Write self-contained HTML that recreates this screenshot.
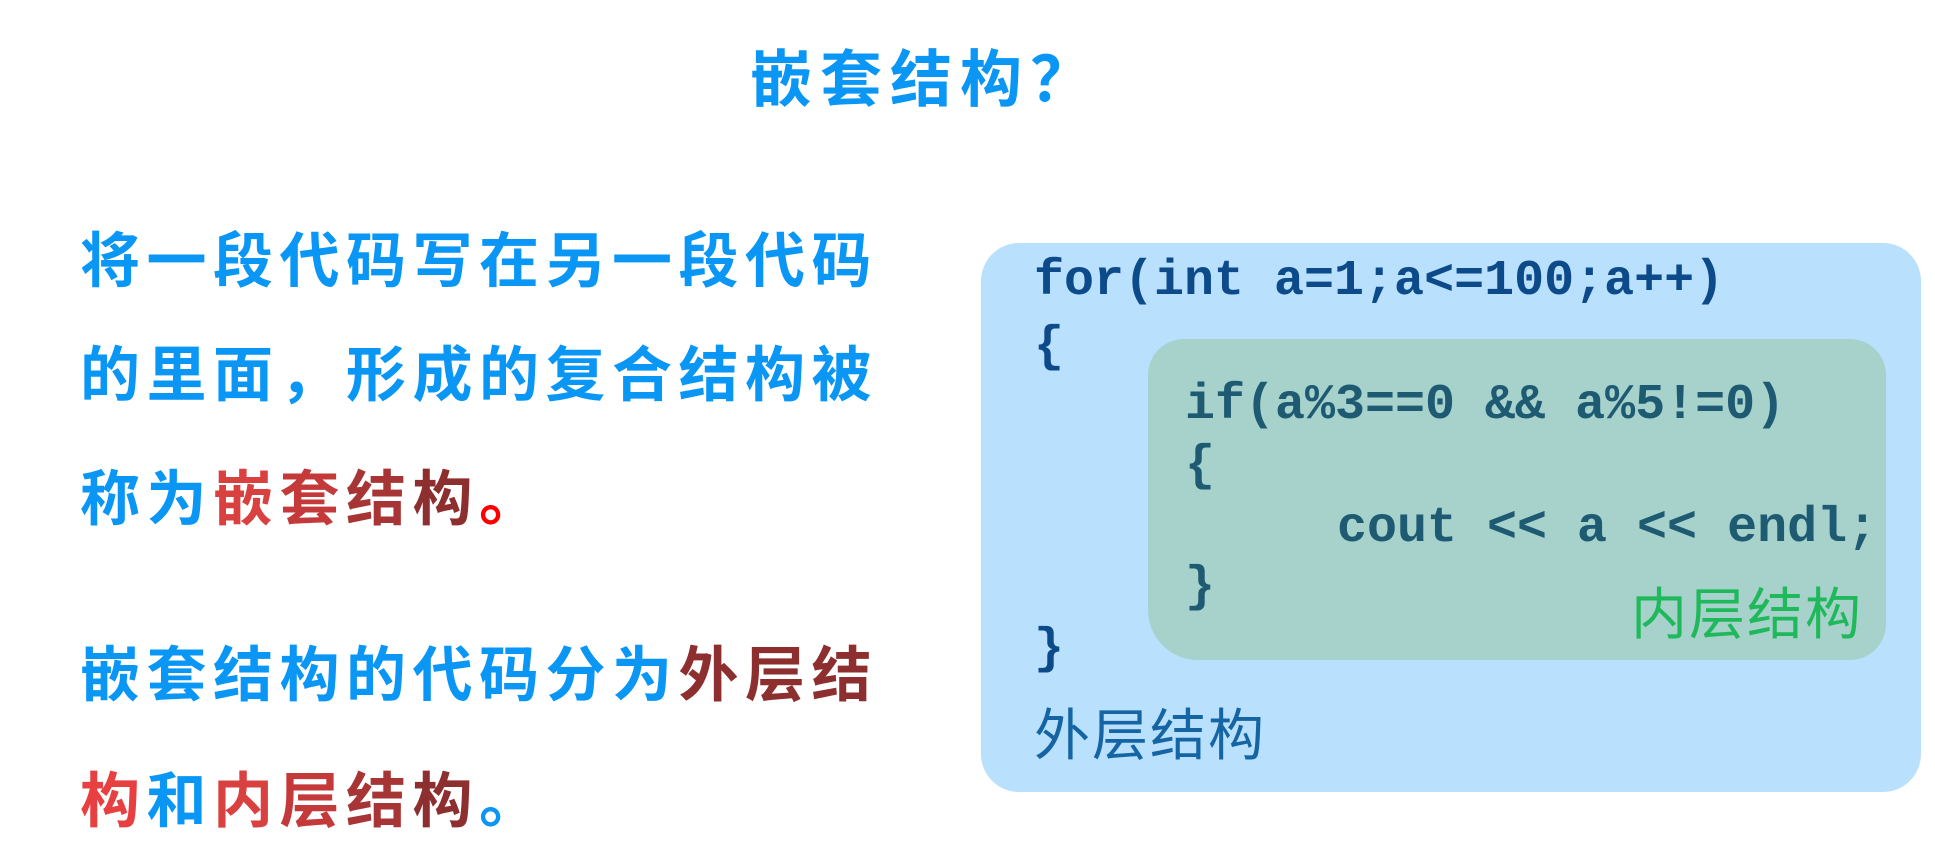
<!DOCTYPE html>
<html><head><meta charset="utf-8"><style>
*{margin:0;padding:0}
body{width:1935px;height:846px;background:#fff;position:relative;overflow:hidden;font-family:"Liberation Sans","Noto Sans CJK SC",sans-serif}
.t{position:absolute;white-space:nowrap;line-height:1;font-weight:bold}
.cj{font-size:60px;letter-spacing:6.5px;color:#0a96f5}
.code{position:absolute;font-family:"Liberation Mono",monospace;font-size:50px;font-weight:bold;line-height:1;white-space:pre}
.o{color:#0d4a8a}.i{color:#1e5a72}
</style></head><body>
<div class="t" style="left:750px;top:50px;font-size:62px;letter-spacing:8px;color:#0a96f5">嵌套结构？</div>

<div class="t cj" style="left:80px;top:232px">将一段代码写在另一段代码</div>
<div class="t cj" style="left:80px;top:346px">的里面，形成的复合结构被</div>
<div class="t cj" style="left:80px;top:470px">称为<span style="color:#d94040">嵌</span><span style="color:#c43a3a">套</span><span style="color:#a83535">结</span><span style="color:#8e2f2f">构</span><span style="color:#f00">。</span></div>
<div class="t cj" style="left:80px;top:646px">嵌套结构的代码分为<span style="color:#8e2f2f">外层结</span></div>
<div class="t cj" style="left:80px;top:772px"><span style="color:#e84040">构</span>和<span style="color:#d94040">内</span><span style="color:#c43a3a">层</span><span style="color:#a83535">结</span><span style="color:#8e2f2f">构</span>。</div>

<div style="position:absolute;left:981px;top:243px;width:940px;height:549px;background:#b9e0fd;border-radius:38px"></div>
<div style="position:absolute;left:1148px;top:339px;width:738px;height:321px;background:#a6d2cb;border-radius:36px 36px 36px 50px"></div>

<div class="code o" style="left:1034px;top:257px">for(int a=1;a&lt;=100;a++)</div>
<div class="code o" style="left:1034px;top:323px">{</div>
<div class="code i" style="left:1185px;top:381px">if(a%3==0 &amp;&amp; a%5!=0)</div>
<div class="code i" style="left:1185px;top:442px">{</div>
<div class="code i" style="left:1337px;top:504px">cout &lt;&lt; a &lt;&lt; endl;</div>
<div class="code i" style="left:1185px;top:563px">}</div>
<div class="code o" style="left:1034px;top:625px">}</div>

<div class="t" style="left:1631px;top:587px;font-size:56px;letter-spacing:2px;font-weight:normal;color:#1fb85a">内层结构</div>
<div class="t" style="left:1034px;top:708px;font-size:56px;letter-spacing:2px;font-weight:normal;color:#1565a5">外层结构</div>
</body></html>
